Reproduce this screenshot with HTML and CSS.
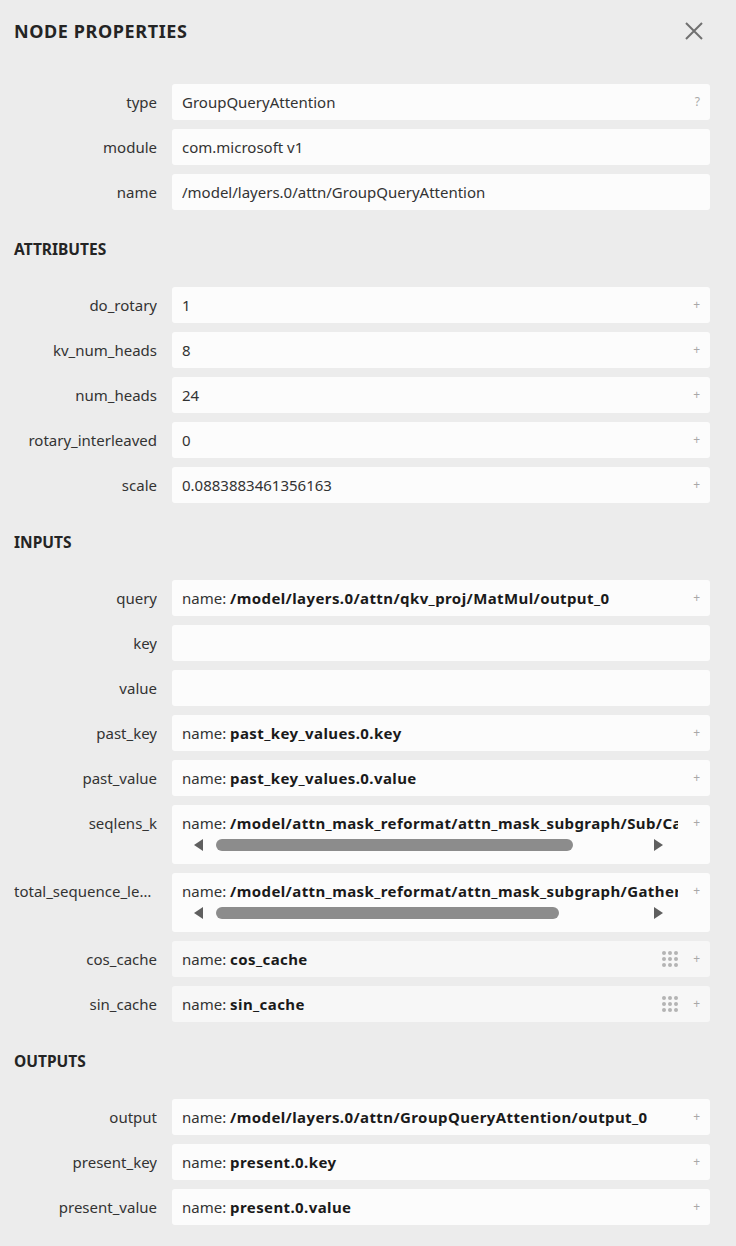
FILE: index.html
```html
<!DOCTYPE html>
<html lang="en">
<head>
    <meta charset="UTF-8">
    <title>Node Properties</title>
    <link rel="stylesheet" href="styles.css">
</head>
<body>
	<div id="sidebar">
		<div class="title">
			<span>NODE PROPERTIES</span>
			<svg class="close" width="20" height="20" viewBox="0 0 20 20">
				<path d="M2 2L18 18M18 2L2 18" stroke="#707070" stroke-width="2" fill="none"/>
			</svg>
		</div>

		<div class="rows first">
			<div class="row">
				<div class="label">type</div>
				<div class="value"><div class="text">GroupQueryAttention</div><div class="mark">?</div></div>
			</div>
			<div class="row">
				<div class="label">module</div>
				<div class="value"><div class="text">com.microsoft v1</div></div>
			</div>
			<div class="row">
				<div class="label">name</div>
				<div class="value"><div class="text">/model/layers.0/attn/GroupQueryAttention</div></div>
			</div>
		</div>

		<div class="heading">ATTRIBUTES</div>
		<div class="rows">
			<div class="row">
				<div class="label">do_rotary</div>
				<div class="value"><div class="text">1</div><div class="mark">+</div></div>
			</div>
			<div class="row">
				<div class="label">kv_num_heads</div>
				<div class="value"><div class="text">8</div><div class="mark">+</div></div>
			</div>
			<div class="row">
				<div class="label">num_heads</div>
				<div class="value"><div class="text">24</div><div class="mark">+</div></div>
			</div>
			<div class="row">
				<div class="label">rotary_interleaved</div>
				<div class="value"><div class="text">0</div><div class="mark">+</div></div>
			</div>
			<div class="row">
				<div class="label">scale</div>
				<div class="value"><div class="text">0.0883883461356163</div><div class="mark">+</div></div>
			</div>
		</div>

		<div class="heading">INPUTS</div>
		<div class="rows">
			<div class="row">
				<div class="label">query</div>
				<div class="value"><div class="text">name: <b>/model/layers.0/attn/qkv_proj/MatMul/output_0</b></div><div class="mark">+</div></div>
			</div>
			<div class="row">
				<div class="label">key</div>
				<div class="value"><div class="text"></div></div>
			</div>
			<div class="row">
				<div class="label">value</div>
				<div class="value"><div class="text"></div></div>
			</div>
			<div class="row">
				<div class="label">past_key</div>
				<div class="value"><div class="text">name: <b>past_key_values.0.key</b></div><div class="mark">+</div></div>
			</div>
			<div class="row">
				<div class="label">past_value</div>
				<div class="value"><div class="text">name: <b>past_key_values.0.value</b></div><div class="mark">+</div></div>
			</div>
			<div class="row">
				<div class="label">seqlens_k</div>
				<div class="value wide">
					<div class="text">
						<div class="clip">name: <b>/model/attn_mask_reformat/attn_mask_subgraph/Sub/Cast/output_0</b></div>
						<div class="scrollbar">
							<div class="arrow left"></div>
							<div class="track"><div class="thumb" style="width:357px"></div></div>
							<div class="arrow right"></div>
						</div>
					</div>
					<div class="mark">+</div>
				</div>
			</div>
			<div class="row">
				<div class="label">total_sequence_length</div>
				<div class="value wide">
					<div class="text">
						<div class="clip">name: <b>/model/attn_mask_reformat/attn_mask_subgraph/Gather/Cast/output_0</b></div>
						<div class="scrollbar">
							<div class="arrow left"></div>
							<div class="track"><div class="thumb" style="width:343px"></div></div>
							<div class="arrow right"></div>
						</div>
					</div>
					<div class="mark">+</div>
				</div>
			</div>
			<div class="row">
				<div class="label">cos_cache</div>
				<div class="value dim">
					<div class="text">name: <b>cos_cache</b></div>
					<div class="grip"><i></i><i></i><i></i><i></i><i></i><i></i><i></i><i></i><i></i></div>
					<div class="mark">+</div>
				</div>
			</div>
			<div class="row">
				<div class="label">sin_cache</div>
				<div class="value dim">
					<div class="text">name: <b>sin_cache</b></div>
					<div class="grip"><i></i><i></i><i></i><i></i><i></i><i></i><i></i><i></i><i></i></div>
					<div class="mark">+</div>
				</div>
			</div>
		</div>

		<div class="heading">OUTPUTS</div>
		<div class="rows">
			<div class="row">
				<div class="label">output</div>
				<div class="value"><div class="text">name: <b>/model/layers.0/attn/GroupQueryAttention/output_0</b></div><div class="mark">+</div></div>
			</div>
			<div class="row">
				<div class="label">present_key</div>
				<div class="value"><div class="text">name: <b>present.0.key</b></div><div class="mark">+</div></div>
			</div>
			<div class="row">
				<div class="label">present_value</div>
				<div class="value"><div class="text">name: <b>present.0.value</b></div><div class="mark">+</div></div>
			</div>
		</div>
	</div>
</body>
</html>
```

FILE: styles.css
```css
*{
	padding: 0px;
	margin: 0px;
	box-sizing: border-box;
}
body{
	background-color: #ececec;
	color: #222222;
	font-family: "Noto Sans", "Open Sans", sans-serif;
	font-size: 15px;
}
#sidebar{
	padding: 20px 26px 20px 14px;
}
.title{
	display: flex;
	justify-content: space-between;
	align-items: center;
	height: 22px;
	font-size: 18px;
	font-weight: bold;
	letter-spacing: 0.6px;
	color: #242424;
}
.close{
	margin-right: 6px;
}
.rows{
	display: flex;
	flex-direction: column;
	gap: 9px;
}
.rows.first{
	margin-top: 42px;
}
.heading{
	margin: 29px 0 28px 0;
	height: 20px;
	line-height: 20px;
	font-size: 15.5px;
	font-weight: bold;
	color: #242424;
}
.row{
	display: flex;
	align-items: flex-start;
	gap: 15px;
}
.label{
	width: 143px;
	flex-shrink: 0;
	height: 36px;
	line-height: 36px;
	text-align: right;
	white-space: nowrap;
	overflow: hidden;
	text-overflow: ellipsis;
	color: #333333;
}
.value{
	flex: 1;
	min-width: 0;
	display: flex;
	align-items: flex-start;
	min-height: 36px;
	padding: 0 10px;
	background-color: #fcfcfc;
	border-radius: 3px;
}
.value.wide{
	padding-bottom: 11px;
}
.value.dim{
	background-color: #f7f7f7;
}
.text{
	flex: 1;
	min-width: 0;
	line-height: 36px;
	white-space: nowrap;
	overflow: hidden;
	color: #333333;
}
.text b{
	color: #1a1a1a;
	letter-spacing: 0.4px;
}
.clip{
	overflow: hidden;
}
.mark{
	width: 22px;
	flex-shrink: 0;
	text-align: right;
	line-height: 36px;
	font-size: 12px;
	color: #a8a8a8;
}
.grip{
	display: grid;
	grid-template-columns: repeat(3, 4px);
	gap: 2px;
	margin-top: 10px;
}
.grip i{
	display: block;
	width: 4px;
	height: 4px;
	border-radius: 50%;
	background-color: #b4b4b4;
}
.scrollbar{
	display: flex;
	align-items: center;
	height: 16px;
	margin-top: -4px;
	padding: 0 15px 0 12px;
	gap: 13px;
}
.track{
	flex: 1;
	height: 12px;
}
.thumb{
	height: 12px;
	border-radius: 6px;
	background-color: #8c8c8c;
}
.arrow{
	width: 0;
	height: 0;
	border-top: 6px solid transparent;
	border-bottom: 6px solid transparent;
}
.arrow.left{
	border-right: 9px solid #5f5f5f;
}
.arrow.right{
	border-left: 9px solid #5f5f5f;
}
```
